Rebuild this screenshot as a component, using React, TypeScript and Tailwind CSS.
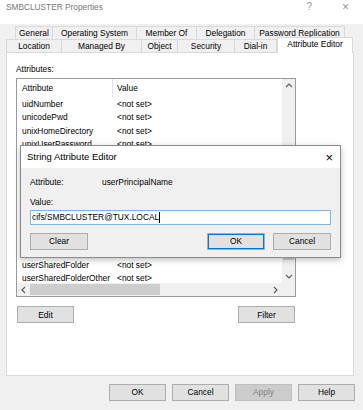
import React from "react";

// rows 4..11 sit fully under the dialog, so they are laid out but not painted
const rows = [
  "uidNumber",
  "unicodePwd",
  "unixHomeDirectory",
  "unixUserPassword",
  "url",
  "userAccountControl",
  "userCert",
  "userCertificate",
  "userParameters",
  "userPassword",
  "userPKCS12",
  "userPrincipalName",
  "userSharedFolder",
  "userSharedFolderOther",
];

const tabsTop = [
  { label: "General", w: "w-[38px]" },
  { label: "Operating System", w: "w-[84px]" },
  { label: "Member Of", w: "w-[60px]" },
  { label: "Delegation", w: "w-[58px]" },
  { label: "Password Replication", w: "w-[90px]" },
];

const tabsBottom = [
  { label: "Location", w: "w-[56px]" },
  { label: "Managed By", w: "w-[80px]" },
  { label: "Object", w: "w-[36px]" },
  { label: "Security", w: "w-[57px]" },
  { label: "Dial-in", w: "w-[42px]" },
];

function Btn({ children, className = "" }: { children: React.ReactNode; className?: string }) {
  return (
    <div
      className={`flex h-[17px] w-[57px] items-center justify-center border border-[#adadad] bg-[#e1e1e1] ${className}`}
    >
      {children}
    </div>
  );
}

function Chevron({ dir }: { dir: "up" | "down" | "left" | "right" }) {
  const d = {
    up: "M1 5 L4 2 L7 5",
    down: "M1 2 L4 5 L7 2",
    left: "M5 1 L2 4 L5 7",
    right: "M2 1 L5 4 L2 7",
  }[dir];
  return (
    <svg width="8" height="8" viewBox="0 0 8 8">
      <path d={d} fill="none" stroke="#606060" strokeWidth="1.2" />
    </svg>
  );
}

export default function App() {
  return (
    <div className="relative h-[410px] w-[363px] overflow-hidden bg-[#f0f0f0] font-['Liberation_Sans',Arial,sans-serif] text-[8.4px] leading-none text-black">
      {/* Title bar */}
      <div className="flex h-[24px] items-start bg-white pl-[6px] pt-[3px] text-[8.3px] text-[#777]">
        <span className="leading-[8px]">SMBCLUSTER Properties</span>
        <span className="ml-auto mr-[30px] text-[10px] leading-[8px] text-[#999]">?</span>
        <span className="mr-[14px] text-[12px] leading-[8px] text-[#999]">×</span>
      </div>

      {/* Tabs */}
      <div className="pt-[2px]">
        <div className="flex h-[13px] pl-[15px]">
          {tabsTop.map((t, i) => (
            <div
              key={t.label}
              className={`flex h-[13px] items-center justify-center border-t border-r border-[#d9d9d9] ${
                i === 0 ? "border-l" : ""
              } ${t.w}`}
            >
              {t.label}
            </div>
          ))}
        </div>
        <div className="relative z-10 flex h-[13px] items-end pl-[6px]">
          {tabsBottom.map((t, i) => (
            <div
              key={t.label}
              className={`flex h-[13px] items-center justify-center border-t border-r border-[#d9d9d9] ${
                i === 0 ? "border-l" : ""
              } ${t.w}`}
            >
              {t.label}
            </div>
          ))}
          <div className="-mb-[1px] flex h-[16px] w-[76px] items-start justify-center border-x border-t border-[#d9d9d9] bg-white pt-[2px]">
            Attribute Editor
          </div>
        </div>
      </div>

      {/* Panel */}
      <div className="ml-[6px] h-[324px] w-[348px] border border-[#d9d9d9] bg-white pl-[9px]">
        <div className="pt-[12px]">Attributes:</div>
        <div className="mt-[5px] flex h-[219px] w-[280px] flex-col border border-[#9a9a9a]">
          <div className="flex min-h-0 flex-1 overflow-hidden">
            <div className="flex-1 overflow-hidden">
              <div className="flex h-[18px] items-center">
                <div className="w-[95px] pl-[5px]">Attribute</div>
                <div className="h-[18px] w-px bg-[#e5e5e5]" />
                <div className="pl-[4px]">Value</div>
              </div>
              {rows.map((r, i) => (
                <div
                  key={r}
                  className={`flex h-[13.4px] items-center ${i > 3 && i < 12 ? "invisible" : ""}`}
                >
                  <div className="w-[100px] whitespace-nowrap pl-[5px]">{r}</div>
                  <div>&lt;not set&gt;</div>
                </div>
              ))}
            </div>
            <div className="flex w-[13px] flex-col bg-[#f0f0f0]">
              <div className="flex h-[13px] items-center justify-center">
                <Chevron dir="up" />
              </div>
              <div className="flex-1 px-[1px] pt-[100px] pb-[10px]">
                <div className="h-full bg-[#cdcdcd]" />
              </div>
              <div className="flex h-[13px] items-center justify-center">
                <Chevron dir="down" />
              </div>
            </div>
          </div>
          <div className="flex h-[13px] bg-[#f0f0f0]">
            <div className="flex w-[13px] items-center justify-center">
              <Chevron dir="left" />
            </div>
            <div className="flex-1 py-[1px]">
              <div className="h-full w-[130px] bg-[#cdcdcd]" />
            </div>
            <div className="flex w-[13px] items-center justify-center">
              <Chevron dir="right" />
            </div>
            <div className="w-[13px]" />
          </div>
        </div>
        <div className="mt-[9px] flex w-[280px] justify-between px-[1px]">
          <Btn>Edit</Btn>
          <Btn>Filter</Btn>
        </div>
      </div>

      {/* Bottom buttons */}
      <div className="mt-[8px] flex justify-end gap-[6px] pr-[8px]">
        <Btn>OK</Btn>
        <Btn>Cancel</Btn>
        <Btn className="!border-[#bfbfbf] !bg-[#cccccc] text-[#838383]">Apply</Btn>
        <Btn>Help</Btn>
      </div>

      {/* String Attribute Editor dialog */}
      <div className="absolute left-[20px] top-[145px] z-20 h-[113px] w-[321px] border border-[#8a8a8a] bg-[#f0f0f0] shadow-[0_2px_6px_rgba(0,0,0,0.25)]">
        <div className="flex h-[22px] items-center bg-white pl-[6px] pr-[7px]">
          <span className="text-[9.5px]">String Attribute Editor</span>
          <span className="ml-auto text-[13px] font-light">×</span>
        </div>
        <div className="pl-[9px] pr-[9px]">
          <div className="mt-[10px] flex">
            <span className="w-[72px]">Attribute:</span>
            <span>userPrincipalName</span>
          </div>
          <div className="mt-[12px]">Value:</div>
          <div className="mt-[3px] flex h-[15px] w-[301px] items-center border border-[#7eb4ea] bg-white pl-[1px]">
            <span>cifs/SMBCLUSTER@TUX.LOCAL</span>
            <span className="h-[11px] w-px bg-black" />
          </div>
          <div className="mt-[8px] flex">
            <Btn className="w-[58px]">Clear</Btn>
            <Btn className="ml-auto w-[58px] border-[#0078d7] shadow-[inset_0_0_0_1px_#0078d7]">OK</Btn>
            <Btn className="ml-[8px] w-[58px]">Cancel</Btn>
          </div>
        </div>
      </div>
    </div>
  );
}
